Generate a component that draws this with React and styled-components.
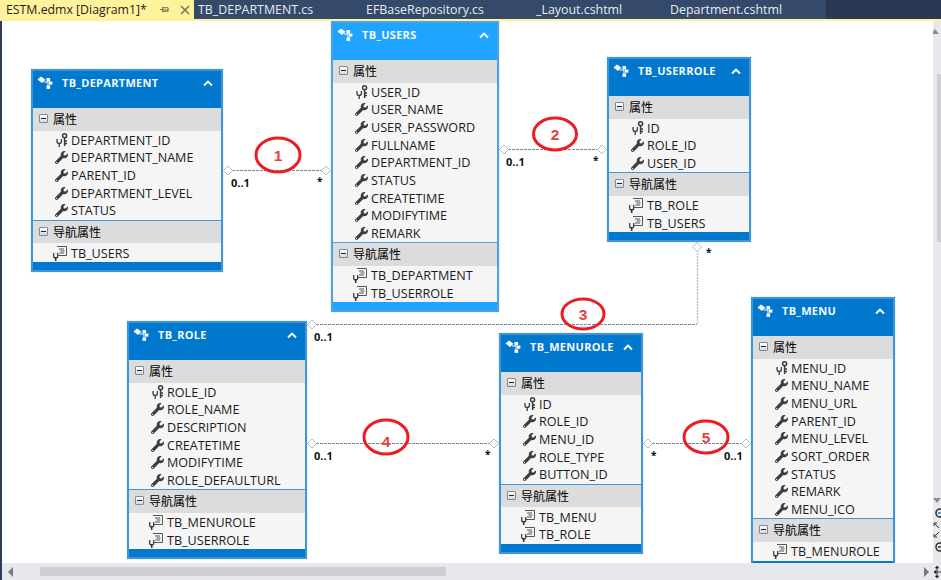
import React from "react";
import styled, { createGlobalStyle } from "styled-components";
import { FaWrench } from "react-icons/fa";

const tabs = [
  { name: "TB_DEPARTMENT.cs", width: 168 },
  { name: "EFBaseRepository.cs", width: 170 },
  { name: "_Layout.cshtml", width: 134 },
  { name: "Department.cshtml", width: 160 },
];

// x / y are positions on the diagram surface
const entities = [
  {
    name: "TB_DEPARTMENT", x: 29, y: 48, width: 192,
    props: ["DEPARTMENT_ID", "DEPARTMENT_NAME", "PARENT_ID", "DEPARTMENT_LEVEL", "STATUS"],
    nav: ["TB_USERS"],
  },
  {
    name: "TB_USERS", x: 329, y: 0, width: 168, selected: true,
    props: ["USER_ID", "USER_NAME", "USER_PASSWORD", "FULLNAME", "DEPARTMENT_ID", "STATUS", "CREATETIME", "MODIFYTIME", "REMARK"],
    nav: ["TB_DEPARTMENT", "TB_USERROLE"],
  },
  {
    name: "TB_USERROLE", x: 605, y: 36, width: 144,
    props: ["ID", "ROLE_ID", "USER_ID"],
    nav: ["TB_ROLE", "TB_USERS"],
  },
  {
    name: "TB_ROLE", x: 125, y: 300, width: 180,
    props: ["ROLE_ID", "ROLE_NAME", "DESCRIPTION", "CREATETIME", "MODIFYTIME", "ROLE_DEFAULTURL"],
    nav: ["TB_MENUROLE", "TB_USERROLE"],
  },
  {
    name: "TB_MENUROLE", x: 497, y: 312, width: 144,
    props: ["ID", "ROLE_ID", "MENU_ID", "ROLE_TYPE", "BUTTON_ID"],
    nav: ["TB_MENU", "TB_ROLE"],
  },
  {
    name: "TB_MENU", x: 749, y: 276, width: 144,
    props: ["MENU_ID", "MENU_NAME", "MENU_URL", "PARENT_ID", "MENU_LEVEL", "SORT_ORDER", "STATUS", "REMARK", "MENU_ICO"],
    nav: ["TB_MENUROLE"],
  },
];

const diamonds = [
  [228, 170.5], [326, 170.5], [504, 149.5], [602, 149.5], [312, 324.5],
  [697, 247], [312, 443.5], [494, 443.5], [648, 443.5], [746, 443.5],
];

const marks = [
  { n: 1, cx: 278, cy: 155, rx: 22, ry: 17, dy: 6 },
  { n: 2, cx: 555, cy: 134, rx: 21.5, ry: 16, dy: 6 },
  { n: 3, cx: 583, cy: 314, rx: 21, ry: 15, dy: 6 },
  { n: 4, cx: 386, cy: 437, rx: 22, ry: 17, dy: 10 },
  { n: 5, cx: 706, cy: 437, rx: 22, ry: 16, dy: 6 },
];

const ends = [
  [231, 187], [506, 166], [314, 341], [314, 460], [724, 460],
];

const stars = [
  [317, 185], [593, 164], [706, 256], [485, 458], [651, 459],
];

const EntityIcon = () => (
  <HeaderIcon viewBox="0 0 16 14">
    <path d="M.5 3.5 4 .5l4.5 3.2L5 7z" fill="#fff" />
    <path d="M7 6h4M11 3v8" stroke="#fff" strokeWidth="1" fill="none" />
    <rect x="9.5" y="2" width="3.6" height="3.2" fill="#fff" />
    <rect x="12" y="5.5" width="3.4" height="3.2" fill="#fff" />
    <rect x="9.5" y="9.5" width="3.6" height="3.4" fill="#fff" />
  </HeaderIcon>
);

const Chevron = () => (
  <ChevronIcon viewBox="0 0 10 7">
    <path d="M1 5.5 5 1.6l4 3.9" fill="none" stroke="#fff" strokeWidth="2" />
  </ChevronIcon>
);

const KeyIcon = () => (
  <RowIcon viewBox="0 0 12 14">
    <circle cx="8.6" cy="2.8" r="2" fill="none" stroke="#3c3c3c" strokeWidth="1.5" />
    <path d="M8.6 5v8M8.6 8H11M8.6 10.5H11" fill="none" stroke="#3c3c3c" strokeWidth="1.5" />
    <path d="M1 6v2.2a2.2 2.2 0 0 0 4.4 0V6M3.2 10v4" fill="none" stroke="#3c3c3c" strokeWidth="1.3" />
  </RowIcon>
);

const NavIcon = () => (
  <NavGlyph viewBox="0 0 14 15">
    <path d="M4 .5h9.5v9H5" fill="none" stroke="#555" />
    <path d="M6 3h5M7.5 5h4M6 7h5" stroke="#555" />
    <path d="M.7 7v3a2 2 0 0 0 4 0V7" fill="none" stroke="#333" strokeWidth="1.2" />
    <path d="M2.7 11v4" stroke="#333" strokeWidth="1.5" />
  </NavGlyph>
);

const Section = ({ label }) => (
  <SectionBar>
    <MinusBox />
    {label}
  </SectionBar>
);

const Entity = ({ entity }) => (
  <EntityBox $x={entity.x} $y={entity.y} $width={entity.width} $selected={entity.selected}>
    <EntityHeader $selected={entity.selected}>
      <EntityIcon />
      <EntityTitle>{entity.name}</EntityTitle>
      <Chevron />
    </EntityHeader>
    <Section label="属性" />
    <RowList>
      {entity.props.map((prop, i) => (
        <PropRow key={prop}>
          <IconSlot>{i === 0 ? <KeyIcon /> : <Wrench />}</IconSlot>
          {prop}
        </PropRow>
      ))}
    </RowList>
    <Divider $selected={entity.selected} />
    <Section label="导航属性" />
    <RowList>
      {entity.nav.map((nav) => (
        <NavRow key={nav}>
          <NavIcon />
          {nav}
        </NavRow>
      ))}
    </RowList>
    <FootBar $selected={entity.selected} />
  </EntityBox>
);

const Connectors = () => (
  <Overlay viewBox="2 21 931 542">
    <g stroke="#78889c" strokeWidth="1" strokeDasharray="3 1" fill="none">
      <path d="M228 170.5H326" />
      <path d="M504 149.5H602" />
      <path d="M312 324.5H697" />
      <path d="M312 443.5H494" />
      <path d="M648 443.5H746" />
    </g>
    <path d="M697.5 247V324" stroke="#b9bdc9" strokeWidth="1.4" strokeDasharray="2 1" fill="none" />
    {diamonds.map(([x, y]) => (
      <path
        key={`${x}-${y}`}
        d={`M${x - 4.5} ${y}L${x} ${y - 4.5}L${x + 4.5} ${y}L${x} ${y + 4.5}Z`}
        fill="#fff"
        stroke="#b2bac2"
      />
    ))}
    {ends.map(([x, y]) => (
      <EndLabel key={`${x}-${y}`} x={x} y={y}>0..1</EndLabel>
    ))}
    {stars.map(([x, y]) => (
      <StarLabel key={`${x}-${y}`} x={x} y={y}>*</StarLabel>
    ))}
    {marks.map((m) => (
      <g key={m.n}>
        <ellipse cx={m.cx} cy={m.cy} rx={m.rx} ry={m.ry} fill="none" stroke="#ec1c24" strokeWidth="3" />
        <MarkNumber x={m.cx} y={m.cy + m.dy}>{m.n}</MarkNumber>
      </g>
    ))}
  </Overlay>
);

const App = () => (
  <Page>
    <GlobalStyle />
    <TabBar>
      <ActiveTab>
        <span>ESTM.edmx [Diagram1]*</span>
        <PinIcon viewBox="0 0 10 10">
          <path d="M0 5h3M3 2v6M3 3h6v4H3M3 5.5h6" fill="none" stroke="#6b6440" />
        </PinIcon>
        <CloseIcon viewBox="0 0 10 10">
          <path d="M1 1l8 8M9 1l-8 8" stroke="#7d7650" strokeWidth="1.6" />
        </CloseIcon>
      </ActiveTab>
      {tabs.map((tab) => (
        <Tab key={tab.name} $width={tab.width}>{tab.name}</Tab>
      ))}
      <TabFill />
    </TabBar>
    <TabLine />
    <Workspace>
      <DiagramRow>
        <Canvas>
          {entities.map((entity) => (
            <Entity key={entity.name} entity={entity} />
          ))}
          <Connectors />
        </Canvas>
        <VScroll>
          <ArrowUp />
          <VThumb />
          <ArrowDown />
          <ZoomTools viewBox="0 0 8 50">
            <circle cx="7" cy="5" r="4" fill="none" stroke="#333" strokeWidth="1.6" />
            <path d="M5 5h4" stroke="#2a6fc0" strokeWidth="1.5" />
            <path d="M1 18v-3h3M1 26v3h3M2 16l4 4M2 28l4-4" fill="none" stroke="#333" />
            <circle cx="7" cy="39" r="4" fill="none" stroke="#333" strokeWidth="1.6" />
            <path d="M5 39h4" stroke="#333" strokeWidth="1.5" />
          </ZoomTools>
        </VScroll>
      </DiagramRow>
      <HScroll>
        <ArrowLeft />
        <HThumb />
        <ArrowRight />
        <MoveIcon viewBox="0 0 8 14">
          <path d="M4 7h4M4 3v8M4 1 2.5 3h3zM4 13l-1.5-2h3zM1 7l2-1.5v3z" fill="#333" stroke="#333" />
        </MoveIcon>
      </HScroll>
    </Workspace>
  </Page>
);

export default App;

const GlobalStyle = createGlobalStyle`
  html, body {
    margin: 0;
    overflow: hidden;
    background: #fff;
  }
`;

const Page = styled.div`
  width: 941px;
  height: 580px;
  display: flex;
  flex-direction: column;
  overflow: hidden;
  font-family: "Open Sans", "Noto Sans CJK SC", sans-serif;
  background: #fff;
`;

const TabBar = styled.div`
  height: 19px;
  display: flex;
  background: #35496a;
  font-size: 12.4px;
  line-height: 19px;
`;

const ActiveTab = styled.div`
  width: 194px;
  flex: none;
  box-sizing: border-box;
  padding-left: 6px;
  display: flex;
  align-items: center;
  background: #fff29d;
  color: #1e1e1e;
  font-size: 12.3px;
  white-space: nowrap;
`;

const PinIcon = styled.svg`
  width: 9px;
  height: 9px;
  margin-left: 13px;
`;

const CloseIcon = styled.svg`
  width: 10px;
  height: 10px;
  margin-left: 11px;
`;

const Tab = styled.div`
  width: ${(p) => p.$width}px;
  flex: none;
  padding-left: 4px;
  box-sizing: border-box;
  color: #e6ebf2;
  white-space: nowrap;
`;

const TabFill = styled.div`
  flex: 1;
  background: #293955;
`;

const TabLine = styled.div`
  height: 2px;
  background: #fff29d;
`;

const Workspace = styled.div`
  flex: 1;
  display: flex;
  flex-direction: column;
  border-left: 2px solid #2d3d5a;
  min-height: 0;
`;

const DiagramRow = styled.div`
  flex: 1;
  display: flex;
  min-height: 0;
`;

const Canvas = styled.div`
  position: relative;
  flex: 1;
  overflow: hidden;
  background: #fff;
`;

const Overlay = styled.svg`
  position: absolute;
  left: 0;
  top: 0;
  width: 931px;
  height: 542px;
`;

const EndLabel = styled.text`
  font-family: "Open Sans", sans-serif;
  font-size: 11px;
  font-weight: 700;
  fill: #111;
`;

const StarLabel = styled(EndLabel)`
  font-size: 10px;
`;

const MarkNumber = styled.text`
  font-family: "Liberation Sans", sans-serif;
  font-size: 15.5px;
  font-weight: 700;
  fill: #e8403c;
  text-anchor: middle;
`;

const EntityBox = styled.div`
  position: absolute;
  left: ${(p) => p.$x}px;
  top: ${(p) => p.$y}px;
  width: ${(p) => p.$width}px;
  box-sizing: border-box;
  border: 2px solid ${(p) => (p.$selected ? "#4aa3e8" : "#3f97d9")};
  background: #f5f5f5;
  box-shadow: 0 0 1px rgba(70, 110, 150, 0.5);
`;

const EntityHeader = styled.div`
  height: 37px;
  box-sizing: border-box;
  padding: 5px 8px 0 4px;
  display: flex;
  align-items: flex-start;
  background: ${(p) => (p.$selected ? "#1fa5ff" : "#0078cd")};
`;

const HeaderIcon = styled.svg`
  width: 16px;
  height: 14px;
  flex: none;
`;

const EntityTitle = styled.div`
  flex: 1;
  margin-left: 9px;
  font-size: 11px;
  line-height: 14px;
  font-weight: 700;
  letter-spacing: 0.3px;
  color: #f4f9fd;
  white-space: nowrap;
`;

const ChevronIcon = styled.svg`
  width: 10px;
  height: 7px;
  margin-top: 4px;
`;

const SectionBar = styled.div`
  height: 22.5px;
  box-sizing: border-box;
  padding: 0 0 2px 6px;
  display: flex;
  align-items: center;
  background: #dcdcdc;
  color: #000;
  font-size: 12px;
  font-family: "Noto Sans CJK SC", sans-serif;
`;

const MinusBox = styled.span`
  position: relative;
  width: 7px;
  height: 7px;
  margin-right: 5px;
  border: 1px solid #7f8a96;
  border-radius: 1px;
  background: linear-gradient(#fff, #d8d8d8);

  &::after {
    content: "";
    position: absolute;
    left: 1px;
    right: 1px;
    top: 3px;
    height: 1px;
    background: #222;
  }
`;

const RowList = styled.div`
  padding-top: 1px;
`;

const PropRow = styled.div`
  height: 17.67px;
  padding-left: 23px;
  display: flex;
  align-items: center;
  font-size: 12.6px;
  color: #1b1b22;
  white-space: nowrap;
`;

const NavRow = styled(PropRow)`
  padding-left: 20px;
`;

const IconSlot = styled.span`
  width: 15px;
  display: flex;
  align-items: center;
`;

const Wrench = styled(FaWrench)`
  width: 13px;
  height: 13px;
  margin-left: -1px;
  color: #3c3c3c;
`;

const RowIcon = styled.svg`
  width: 12px;
  height: 14px;
`;

const NavGlyph = styled.svg`
  width: 14px;
  height: 15px;
  margin-right: 4px;
`;

const Divider = styled.div`
  height: 1px;
  background: ${(p) => (p.$selected ? "#4aa3e8" : "#3f97d9")};
`;

const FootBar = styled.div`
  height: 8px;
  background: ${(p) => (p.$selected ? "#1fa5ff" : "#0078cd")};
`;

const VScroll = styled.div`
  width: 8px;
  display: flex;
  flex-direction: column;
  align-items: flex-end;
  overflow: hidden;
  background: #e8e8ec;
`;

const ArrowUp = styled.div`
  margin: 8px 2px 0 0;
  flex: none;
  border-left: 4px solid transparent;
  border-right: 4px solid transparent;
  border-bottom: 5px solid #8a8d96;
`;

const VThumb = styled.div`
  width: 4px;
  height: 168px;
  margin-top: 40px;
  flex: none;
  background: #cdced3;
`;

const ArrowDown = styled.div`
  margin: 256px 0 0 0;
  flex: none;
  border-left: 4px solid transparent;
  border-right: 4px solid transparent;
  border-top: 5px solid #8a8d96;
`;

const ZoomTools = styled.svg`
  width: 8px;
  height: 50px;
  margin-top: 5px;
  flex: none;
`;

const HScroll = styled.div`
  height: 17px;
  display: flex;
  align-items: center;
  background: #e8e8ec;
`;

const ArrowLeft = styled.div`
  margin-left: 6px;
  border-top: 5px solid transparent;
  border-bottom: 5px solid transparent;
  border-right: 5px solid #77797f;
`;

const HThumb = styled.div`
  width: 406px;
  height: 9px;
  margin-left: 27px;
  background: #cdced3;
`;

const ArrowRight = styled.div`
  margin-left: 478px;
  border-top: 5px solid transparent;
  border-bottom: 5px solid transparent;
  border-left: 5px solid #77797f;
`;

const MoveIcon = styled.svg`
  width: 8px;
  height: 14px;
  margin-left: 4px;
`;
